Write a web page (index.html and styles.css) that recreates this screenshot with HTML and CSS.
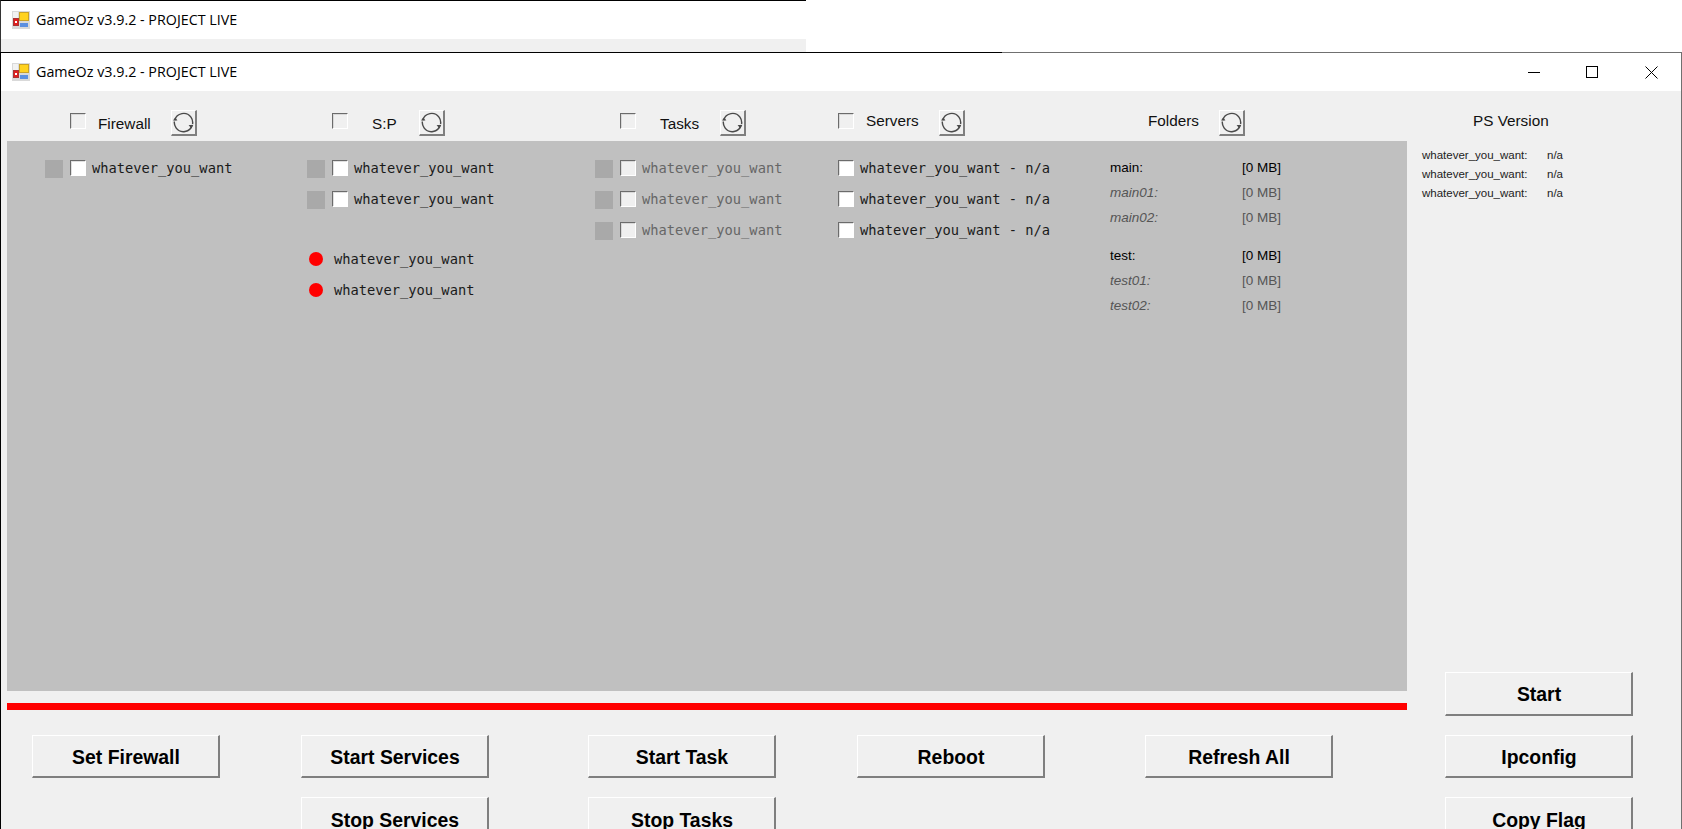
FILE: index.html
```html
<!DOCTYPE html>
<html lang="en">
<head>
<meta charset="utf-8">
<title>GameOz v3.9.2 - PROJECT LIVE</title>
<link rel="stylesheet" href="styles.css">
</head>
<body>
<svg class="defs" width="0" height="0" aria-hidden="true">
  <symbol id="app" viewBox="0 0 18 18">
    <rect width="18" height="18" fill="#d9d9d9"/>
    <rect x="1" y="1" width="5" height="6" fill="#f2f2f2"/>
    <rect x="7" y="1" width="10" height="9" fill="#c9a227"/>
    <rect x="8" y="2" width="8" height="7" fill="#ffd21f"/>
    <rect x="1" y="7" width="6" height="8" fill="#a33"/>
    <rect x="2" y="8" width="4" height="6" fill="#e02020"/>
    <rect x="3" y="10" width="2" height="2" fill="#fff"/>
    <rect x="8" y="12" width="8" height="4" fill="#5b8fe0"/>
  </symbol>
  <symbol id="refresh" viewBox="0 0 22 22">
    <path d="M1.8 8.6A9.6 9.6 0 0 1 18.8 5.4 9.6 9.6 0 0 1 20.5 12.6" fill="none" stroke="#4a4a4a" stroke-width="1.5"/>
    <path d="M20.2 13.6A9.6 9.6 0 0 1 3.2 16.6 9.6 9.6 0 0 1 1.4 10" fill="none" stroke="#4a4a4a" stroke-width="1.5"/>
    <path d="M0 9 4.6 9 2.4 5.4Z" fill="#4a4a4a"/>
    <path d="M16.4 13.6 21.2 13.6 19 17.4Z" fill="#4a4a4a"/>
  </symbol>
</svg>
<div class="stage">
  <div class="behind">
    <div class="titlebar">
      <svg class="app-icon"><use href="#app"/></svg>
      <span class="title">GameOz v3.9.2 - PROJECT LIVE</span>
    </div>
    <div class="behind-strip"></div>
  </div>
  <div class="window">
    <div class="titlebar">
      <svg class="app-icon"><use href="#app"/></svg>
      <span class="title">GameOz v3.9.2 - PROJECT LIVE</span>
      <div class="controls">
        <span class="control"><svg width="12" height="12" viewBox="0 0 12 12"><path d="M0 6.5H12" stroke="#000"/></svg></span>
        <span class="control"><svg width="12" height="12" viewBox="0 0 12 12"><rect x=".5" y=".5" width="11" height="11" fill="none" stroke="#000"/></svg></span>
        <span class="control control-close"><svg width="13" height="13" viewBox="0 0 13 13"><path d="M.5.5 12.5 12.5M12.5.5.5 12.5" stroke="#000"/></svg></span>
      </div>
    </div>
    <div class="client">
      <div class="main">
        <div class="columns header">
          <div class="head head-indent">
            <input type="checkbox" class="check check-head">
            <span class="head-label label-firewall low">Firewall</span>
            <button class="refresh"><svg class="refresh-icon"><use href="#refresh"/></svg></button>
          </div>
          <div class="head head-indent">
            <input type="checkbox" class="check check-head">
            <span class="head-label label-sp low">S:P</span>
            <button class="refresh"><svg class="refresh-icon"><use href="#refresh"/></svg></button>
          </div>
          <div class="head head-indent">
            <input type="checkbox" class="check check-head">
            <span class="head-label label-tasks low">Tasks</span>
            <button class="refresh"><svg class="refresh-icon"><use href="#refresh"/></svg></button>
          </div>
          <div class="head">
            <input type="checkbox" class="check check-head">
            <span class="head-label label-servers">Servers</span>
            <button class="refresh"><svg class="refresh-icon"><use href="#refresh"/></svg></button>
          </div>
          <div class="head">
            <span class="head-label label-folders">Folders</span>
            <button class="refresh"><svg class="refresh-icon"><use href="#refresh"/></svg></button>
          </div>
        </div>

        <div class="columns panel">
          <div class="list">
            <div class="row"><span class="square"></span><input type="checkbox" class="check light"><span class="mono">whatever_you_want</span></div>
          </div>
          <div class="list">
            <div class="row"><span class="square"></span><input type="checkbox" class="check light"><span class="mono">whatever_you_want</span></div>
            <div class="row"><span class="square"></span><input type="checkbox" class="check light"><span class="mono">whatever_you_want</span></div>
            <div class="row status first-status"><span class="dot"></span><span class="mono">whatever_you_want</span></div>
            <div class="row status"><span class="dot"></span><span class="mono">whatever_you_want</span></div>
          </div>
          <div class="list">
            <div class="row"><span class="square"></span><input type="checkbox" class="check" disabled><span class="mono muted">whatever_you_want</span></div>
            <div class="row"><span class="square"></span><input type="checkbox" class="check" disabled><span class="mono muted">whatever_you_want</span></div>
            <div class="row"><span class="square"></span><input type="checkbox" class="check" disabled><span class="mono muted">whatever_you_want</span></div>
          </div>
          <div class="list">
            <div class="row"><input type="checkbox" class="check light"><span class="mono">whatever_you_want - n/a</span></div>
            <div class="row"><input type="checkbox" class="check light"><span class="mono">whatever_you_want - n/a</span></div>
            <div class="row"><input type="checkbox" class="check light"><span class="mono">whatever_you_want - n/a</span></div>
          </div>
          <div class="folders">
            <div class="folder-group">
              <div class="folder"><span>main:</span><span>[0 MB]</span></div>
              <div class="folder sub"><span><i>main01:</i></span><span>[0 MB]</span></div>
              <div class="folder sub"><span><i>main02:</i></span><span>[0 MB]</span></div>
            </div>
            <div class="folder-group">
              <div class="folder"><span>test:</span><span>[0 MB]</span></div>
              <div class="folder sub"><span><i>test01:</i></span><span>[0 MB]</span></div>
              <div class="folder sub"><span><i>test02:</i></span><span>[0 MB]</span></div>
            </div>
          </div>
        </div>

        <div class="progress"></div>

        <div class="actions">
          <button class="action">Set Firewall</button>
          <button class="action">Start Services</button>
          <button class="action">Start Task</button>
          <button class="action">Reboot</button>
          <button class="action">Refresh All</button>
          <button class="action action-low action-col2">Stop Services</button>
          <button class="action action-low">Stop Tasks</button>
        </div>
      </div>

      <aside class="side">
        <div class="side-head"><span class="head-label">PS Version</span></div>
        <div class="versions">
          <div class="version"><span>whatever_you_want:</span><span>n/a</span></div>
          <div class="version"><span>whatever_you_want:</span><span>n/a</span></div>
          <div class="version"><span>whatever_you_want:</span><span>n/a</span></div>
        </div>
        <div class="side-actions">
          <button class="action action-tall">Start</button>
          <button class="action">Ipconfig</button>
          <button class="action action-low">Copy Flag</button>
        </div>
      </aside>
    </div>
  </div>
</div>
</body>
</html>
```
FILE: styles.css
```css
* { box-sizing: border-box; }
html, body { margin: 0; height: 100%; overflow: hidden; background: #fff; }
.defs { position: absolute; }

.stage {
  width: 1682px;
  height: 829px;
  overflow: hidden;
  display: flex;
  flex-direction: column;
  font-family: "Liberation Sans", Arial, sans-serif;
  color: #000;
}

/* windows */
.behind {
  width: 806px;
  height: 52px;
  flex: none;
  display: flex;
  flex-direction: column;
  border-top: 1px solid #000;
  border-left: 1px solid #333;
}
.behind-strip { flex: 1; background: #f0f0f0; }

.window {
  flex: 1;
  min-height: 0;
  display: flex;
  flex-direction: column;
  background: #f0f0f0;
  border-left: 1px solid #444;
  border-right: 1px solid #707070;
  border-top: 1px solid #707070;
  border-image: linear-gradient(to right, #000 1002px, #707070 1002px) 1;
}
.titlebar {
  flex: none;
  height: 38px;
  display: flex;
  align-items: center;
  background: #fff;
  padding-left: 11px;
}
.app-icon { width: 18px; height: 18px; flex: none; }
.title {
  margin-left: 6px;
  padding-bottom: 2px;
  font-family: "Open Sans", "Noto Sans", sans-serif;
  font-size: 14.3px;
  white-space: nowrap;
}
.controls { margin-left: auto; display: flex; padding-right: 1px; }
.control { width: 58px; height: 38px; display: flex; align-items: center; justify-content: center; }
.control-close { width: 59px; padding-left: 1px; }

.client { display: flex; padding-left: 6px; align-items: stretch; }
.main { width: 1400px; flex: none; }

/* shared column tracks of header and panel */
.columns {
  display: grid;
  grid-template-columns: 262px 288px 243px 272px 1fr;
  padding-left: 38px;
}

.header { height: 50px; padding-top: 19px; align-items: start; }
.head { display: flex; align-items: center; height: 26px; }
.head-indent { padding-left: 25px; }
.head-label { font-size: 15.3px; white-space: nowrap; color: #111; flex: none; margin-bottom: 4px; }
.head-label.low { margin-bottom: 0; padding-top: 2px; }
.label-firewall { margin-left: 12px; width: 73px; }
.label-sp { margin-left: 24px; width: 47px; }
.label-tasks { margin-left: 24px; width: 60px; }
.label-servers { margin-left: 12px; width: 73px; }
.label-folders { margin-left: 38px; width: 71px; }

.check {
  appearance: none;
  margin: 0;
  width: 16px;
  height: 16px;
  flex: none;
  background: #f0f0f0;
  border-style: solid;
  border-width: 1px;
  border-color: #6b6b6b #fff #fff #6b6b6b;
  box-shadow: inset 1px 1px 0 #d8d8d8;
  align-self: flex-start;
}
.check.light { background: #fff; box-shadow: inset 1px 1px 0 #e0e0e0; }
.check-head { margin-top: 3px; }

.refresh {
  width: 26px;
  height: 26px;
  padding: 0 0 0 1px;
  background: #f0f0f0;
  display: flex;
  align-items: center;
  justify-content: flex-start;
  border-style: solid;
  border-width: 1px 2px 2px 1px;
  border-color: #fff #7f7f7f #7f7f7f #fff;
}
.refresh-icon { width: 21px; height: 21px; display: block; }

/* panel */
.panel { height: 550px; background: #c0c0c0; padding-top: 14px; }
.list { display: flex; flex-direction: column; gap: 13px; padding-top: 5px; }
.row { display: flex; align-items: center; height: 18px; }
.square { width: 18px; height: 18px; background: #a9a9a9; margin-right: 7px; flex: none; }
.mono {
  font-family: "DejaVu Sans Mono", "Liberation Mono", monospace;
  font-size: 13.72px;
  margin-left: 6px;
  margin-bottom: 2px;
  white-space: nowrap;
  color: #1a1a1a;
}
.mono.muted { color: #666; }
.status { padding-left: 2px; }
.status .mono { margin-left: 11px; margin-bottom: 1px; }
.first-status { margin-top: 28px; }
.dot { width: 14px; height: 14px; border-radius: 50%; background: #f00; flex: none; }

.folders { display: flex; flex-direction: column; gap: 13px; }
.folder {
  display: grid;
  grid-template-columns: 132px auto;
  justify-content: start;
  height: 25px;
  line-height: 25px;
  font-size: 13.5px;
  color: #000;
}
.folder.sub { color: #555; }

.progress { height: 7px; margin-top: 12px; background: #f00; }

/* buttons */
.action {
  width: 188px;
  height: 43px;
  padding: 2px 0 0 1px;
  font-family: "Liberation Sans", Arial, sans-serif;
  font-size: 19.4px;
  font-weight: 700;
  color: #000;
  background: #f0f0f0;
  border-style: solid;
  border-width: 1px 2px 2px 1px;
  border-color: #fff #7f7f7f #7f7f7f #fff;
}
.action-tall { height: 44px; }
.action-low { padding-top: 4px; }
.actions {
  display: grid;
  grid-template-columns: 269px 287px 269px 288px 188px;
  row-gap: 19px;
  padding-left: 25px;
  margin-top: 25px;
}
.action-col2 { grid-column: 2; }

/* sidebar */
.side { flex: 1; display: flex; flex-direction: column; min-width: 0; }
.side-head { height: 50px; display: flex; align-items: center; padding: 14px 0 0 66px; }
.versions { padding: 5px 0 0 15px; }
.version {
  display: grid;
  grid-template-columns: 125px auto;
  justify-content: start;
  line-height: 19px;
  height: 19px;
  font-size: 11.5px;
  color: #222;
}
.side-actions { margin-top: auto; padding-left: 38px; display: flex; flex-direction: column; gap: 19px; }
```
